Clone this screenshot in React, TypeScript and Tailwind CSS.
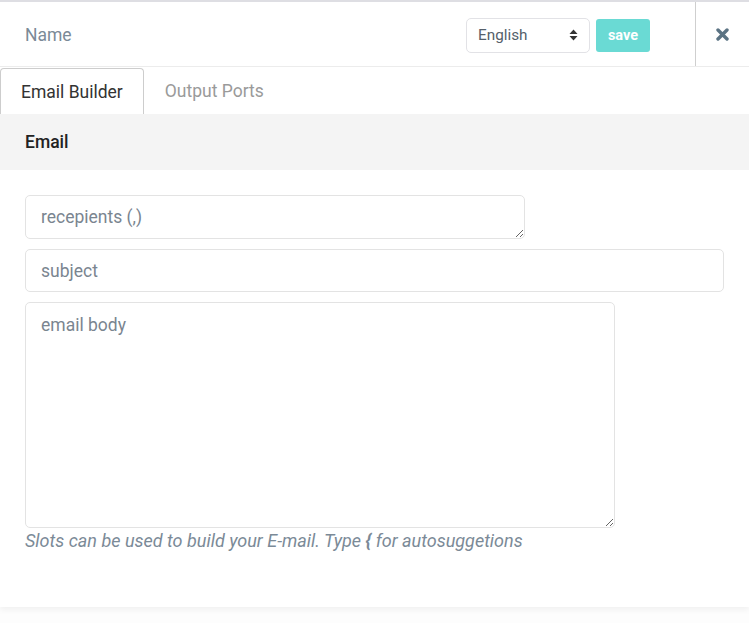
import { useState } from "react";

function SortIcon() {
  return (
    <svg width="9" height="12" viewBox="0 0 9 12" className="text-[#333]">
      <path d="M4.5 0.5 L8.5 5 L0.5 5 Z" fill="currentColor" />
      <path d="M4.5 11.5 L8.5 7 L0.5 7 Z" fill="currentColor" />
    </svg>
  );
}

function CloseIcon() {
  return (
    <svg width="13" height="13" viewBox="0 0 13 13">
      <path d="M2 2 L11 11 M11 2 L2 11" stroke="#5b7383" strokeWidth="3.4" strokeLinecap="round" />
    </svg>
  );
}

export default function App() {
  const [tab, setTab] = useState("builder");

  return (
    <div className="min-h-[623px] bg-[#fdfdfd] font-['Roboto',sans-serif]">
      <div className="bg-white border-t-2 border-[#dedee3] shadow-[0_3px_6px_rgba(0,0,0,0.05)]">
        {/* header */}
        <div className="flex h-[65px] border-b border-[#ececec]">
          <div className="flex flex-1 items-center justify-between pl-[25px] pr-[45px]">
            <span className="pt-[2px] text-[17.5px] text-[#7b8a97]">Name</span>
            <div className="flex items-center gap-[6px] pt-[2px]">
              <div className="flex h-[35px] w-[124px] items-center justify-between rounded-[5px] border border-[#e2e2e6] pl-[11px] pr-[11px] text-[15.3px] text-[#555f6a]">
                <span>English</span>
                <SortIcon />
              </div>
              <button className="h-[33px] w-[54px] rounded-[3px] bg-[#6adad4] pt-[1px] text-[14.5px] font-bold text-white">
                save
              </button>
            </div>
          </div>
          <div className="flex w-[54px] items-center justify-center border-l border-[#cfcfcf] pt-[1px]">
            <CloseIcon />
          </div>
        </div>

        {/* tabs */}
        <div className="flex h-[47px] items-end">
          <button
            onClick={() => setTab("builder")}
            className={
              tab === "builder"
                ? "h-[46px] rounded-t-[4px] border border-b-0 border-[#cdcdcd] px-[20px] pt-[1px] text-[17.5px] text-[#333]"
                : "h-[46px] px-[21px] pt-[1px] text-[17.5px] text-[#9a9a9a]"
            }
          >
            Email Builder
          </button>
          <button
            onClick={() => setTab("ports")}
            className={
              tab === "ports"
                ? "h-[46px] rounded-t-[4px] border border-b-0 border-[#cdcdcd] px-[20px] pt-[1px] text-[17.5px] text-[#333]"
                : "h-[46px] px-[21px] pt-[1px] text-[17.5px] text-[#9a9a9a]"
            }
          >
            Output Ports
          </button>
        </div>

        {/* section title */}
        <div className="flex h-[56px] items-center bg-[#f4f4f4] px-[25px]">
          <span className="text-[17.5px] font-medium text-[#222]">Email</span>
        </div>

        {/* form */}
        <div className="flex flex-col px-[25px] pt-[25px] pb-[54px]">
          <textarea
            placeholder="recepients (,)"
            className="h-[44px] w-[500px] rounded-[5px] border border-[#e3e3e3] px-[15px] pt-[9px] pb-[7px] text-[17.5px] leading-6 text-[#333] outline-none placeholder:text-[#7a8590]"
          />
          <input
            placeholder="subject"
            className="mt-[10px] h-[43px] w-full rounded-[5px] border border-[#e3e3e3] px-[15px] text-[17.5px] text-[#333] outline-none placeholder:text-[#7a8590]"
          />
          <textarea
            placeholder="email body"
            className="mt-[10px] h-[226px] w-[590px] rounded-[5px] border border-[#e3e3e3] px-[15px] pt-[10px] pb-[8px] text-[17.5px] leading-6 text-[#333] outline-none placeholder:text-[#7a8590]"
          />
          <p className="mt-[1px] text-[18px] italic leading-6 text-[#7b8a97]">
            Slots can be used to build your E-mail. Type <b>{"{"}</b> for autosuggetions
          </p>
        </div>
      </div>
    </div>
  );
}
